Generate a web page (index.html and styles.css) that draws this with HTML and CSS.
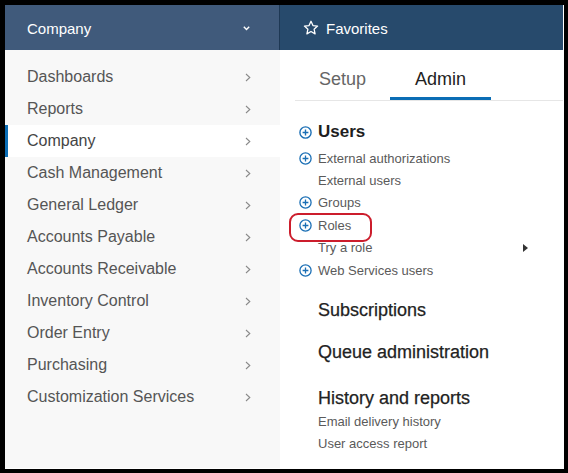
FILE: index.html
```html
<!DOCTYPE html>
<html>
<head>
<meta charset="utf-8">
<link rel="stylesheet" href="styles.css">
</head>
<body>
<div class="app">
  <header class="hdr hdr-left">
    <span class="hdr-title">Company</span>
    <svg class="hdr-chev" width="7" height="5" viewBox="0 0 7 5"><path d="M0.8 0.8 L3.5 3.6 L6.2 0.8" fill="none" stroke="#fff" stroke-width="1.4"/></svg>
  </header>
  <header class="hdr hdr-right">
    <svg class="star" width="16" height="16" viewBox="0 0 16 16"><path d="M8 1.3 L9.95 5.6 L14.6 6.1 L11.1 9.2 L12.1 13.9 L8 11.5 L3.9 13.9 L4.9 9.2 L1.4 6.1 L6.05 5.6 Z" fill="none" stroke="#fff" stroke-width="1.3" stroke-linejoin="round"/></svg>
    <span class="hdr-title">Favorites</span>
  </header>
  <nav class="sidebar">
    <ul class="menu">
      <li class="menu-item"><span>Dashboards</span><svg class="chev" width="6" height="9" viewBox="0 0 6 9"><path d="M1 1 L4.8 4.5 L1 8" fill="none" stroke="#8a8a8a" stroke-width="1.1"/></svg></li>
      <li class="menu-item"><span>Reports</span><svg class="chev" width="6" height="9" viewBox="0 0 6 9"><path d="M1 1 L4.8 4.5 L1 8" fill="none" stroke="#8a8a8a" stroke-width="1.1"/></svg></li>
      <li class="menu-item active"><span>Company</span><svg class="chev" width="6" height="9" viewBox="0 0 6 9"><path d="M1 1 L4.8 4.5 L1 8" fill="none" stroke="#8a8a8a" stroke-width="1.1"/></svg></li>
      <li class="menu-item"><span>Cash Management</span><svg class="chev" width="6" height="9" viewBox="0 0 6 9"><path d="M1 1 L4.8 4.5 L1 8" fill="none" stroke="#8a8a8a" stroke-width="1.1"/></svg></li>
      <li class="menu-item"><span>General Ledger</span><svg class="chev" width="6" height="9" viewBox="0 0 6 9"><path d="M1 1 L4.8 4.5 L1 8" fill="none" stroke="#8a8a8a" stroke-width="1.1"/></svg></li>
      <li class="menu-item"><span>Accounts Payable</span><svg class="chev" width="6" height="9" viewBox="0 0 6 9"><path d="M1 1 L4.8 4.5 L1 8" fill="none" stroke="#8a8a8a" stroke-width="1.1"/></svg></li>
      <li class="menu-item"><span>Accounts Receivable</span><svg class="chev" width="6" height="9" viewBox="0 0 6 9"><path d="M1 1 L4.8 4.5 L1 8" fill="none" stroke="#8a8a8a" stroke-width="1.1"/></svg></li>
      <li class="menu-item"><span>Inventory Control</span><svg class="chev" width="6" height="9" viewBox="0 0 6 9"><path d="M1 1 L4.8 4.5 L1 8" fill="none" stroke="#8a8a8a" stroke-width="1.1"/></svg></li>
      <li class="menu-item"><span>Order Entry</span><svg class="chev" width="6" height="9" viewBox="0 0 6 9"><path d="M1 1 L4.8 4.5 L1 8" fill="none" stroke="#8a8a8a" stroke-width="1.1"/></svg></li>
      <li class="menu-item"><span>Purchasing</span><svg class="chev" width="6" height="9" viewBox="0 0 6 9"><path d="M1 1 L4.8 4.5 L1 8" fill="none" stroke="#8a8a8a" stroke-width="1.1"/></svg></li>
      <li class="menu-item"><span>Customization Services</span><svg class="chev" width="6" height="9" viewBox="0 0 6 9"><path d="M1 1 L4.8 4.5 L1 8" fill="none" stroke="#8a8a8a" stroke-width="1.1"/></svg></li>
    </ul>
  </nav>
  <main class="pane">
    <div class="tabs">
      <div class="tab">Setup</div>
      <div class="tab tab-active">Admin</div>
    </div>
    <section class="content">
      <div class="row heading heading-main">
        <svg class="plus" width="13" height="13" viewBox="0 0 13 13"><circle cx="6.5" cy="6.5" r="5.6" fill="none" stroke="#1b6fb5" stroke-width="1.4"/><path d="M6.5 3.6 V9.4 M3.6 6.5 H9.4" stroke="#1b6fb5" stroke-width="1.4"/></svg>
        <span>Users</span>
      </div>
      <ul class="links">
        <li class="row"><svg class="plus" width="13" height="13" viewBox="0 0 13 13"><circle cx="6.5" cy="6.5" r="5.6" fill="none" stroke="#1b6fb5" stroke-width="1.3"/><path d="M6.5 3.6 V9.4 M3.6 6.5 H9.4" stroke="#1b6fb5" stroke-width="1.3"/></svg><span>External authorizations</span></li>
        <li class="row indent"><span>External users</span></li>
        <li class="row"><svg class="plus" width="13" height="13" viewBox="0 0 13 13"><circle cx="6.5" cy="6.5" r="5.6" fill="none" stroke="#1b6fb5" stroke-width="1.3"/><path d="M6.5 3.6 V9.4 M3.6 6.5 H9.4" stroke="#1b6fb5" stroke-width="1.3"/></svg><span>Groups</span></li>
        <li class="row highlighted"><svg class="plus" width="13" height="13" viewBox="0 0 13 13"><circle cx="6.5" cy="6.5" r="5.6" fill="none" stroke="#1b6fb5" stroke-width="1.3"/><path d="M6.5 3.6 V9.4 M3.6 6.5 H9.4" stroke="#1b6fb5" stroke-width="1.3"/></svg><span>Roles</span></li>
        <li class="row indent"><span>Try a role</span><span class="tri"></span></li>
        <li class="row"><svg class="plus" width="13" height="13" viewBox="0 0 13 13"><circle cx="6.5" cy="6.5" r="5.6" fill="none" stroke="#1b6fb5" stroke-width="1.3"/><path d="M6.5 3.6 V9.4 M3.6 6.5 H9.4" stroke="#1b6fb5" stroke-width="1.3"/></svg><span>Web Services users</span></li>
      </ul>
      <div class="row indent heading heading-sub h-subs"><span>Subscriptions</span></div>
      <div class="row indent heading heading-sub h-queue"><span>Queue administration</span></div>
      <div class="row indent heading heading-sub h-hist"><span>History and reports</span></div>
      <ul class="links">
        <li class="row indent"><span>Email delivery history</span></li>
        <li class="row indent"><span>User access report</span></li>
      </ul>
    </section>
  </main>
</div>
</body>
</html>
```
FILE: styles.css
```css
* { box-sizing: border-box; }
html, body { margin: 0; height: 100%; }
body {
  background: #000;
  padding: 5px 4px 4px 5px;
  font-family: "Liberation Sans", Arial, sans-serif;
}
ul { list-style: none; margin: 0; padding: 0; }

.app {
  display: grid;
  grid-template-columns: 275px 1fr;
  grid-template-rows: 45px 1fr;
  height: 464px;
  border-right: 1px solid #fff;
  border-bottom: 1px solid #fff;
  background: #fff;
}

.hdr {
  display: flex;
  align-items: center;
  color: #fff;
  font-size: 15px;
  padding-top: 1px;
}
.hdr-left {
  background: #405a7b;
  border-right: 1px solid #1e3854;
  padding-left: 22px;
  padding-right: 29px;
  justify-content: space-between;
}
.hdr-right {
  background: #274a6c;
  padding-left: 23px;
  gap: 7px;
}
.hdr-chev { display: block; }
.star { display: block; }

.sidebar {
  background: #f8f8f8;
  padding-top: 11px;
}
.menu-item {
  height: 32px;
  display: flex;
  align-items: center;
  justify-content: space-between;
  padding: 0 29px 0 22px;
  font-size: 16px;
  color: #555;
}
.menu-item.active {
  background: #fff;
  border-left: 3px solid #0b6db5;
  padding-left: 19px;
  color: #444;
}
.chev { display: block; }

.pane { background: #fff; }
.tabs {
  display: flex;
  margin-left: 15px;
  border-bottom: 1px solid #e6e6e6;
}
.tab {
  height: 50px;
  padding: 18px 24px 0;
  line-height: 22px;
  font-size: 18px;
  color: #666;
}
.tab-active {
  padding: 18px 25px 0;
  color: #222;
  border-bottom: 3px solid #0b6db5;
}

.content {
  padding: 18px 35px 0 19px;
}
.row {
  display: flex;
  align-items: center;
  gap: 6px;
  height: 22.4px;
  font-size: 13px;
  color: #5a5a5a;
}
.row.indent { padding-left: 19px; }
.plus { display: block; flex: none; }

.heading-main {
  height: 26px;
  margin-bottom: 2px;
  font-size: 17px;
  font-weight: bold;
  color: #1e1e1e;
}
.heading-sub {
  height: 26px;
  font-size: 18px;
  color: #222;
  -webkit-text-stroke: 0.25px #222;
}
.h-subs { margin-top: 16px; }
.h-queue { margin-top: 16px; }
.h-hist { margin-top: 21px; height: 24px; }

.highlighted { position: relative; }
.highlighted::after {
  content: "";
  position: absolute;
  left: -10px;
  top: -1px;
  width: 79px;
  height: 25px;
  border: 2px solid #cc1d2c;
  border-radius: 9px;
}

.tri {
  margin-left: auto;
  width: 0;
  height: 0;
  border-top: 4px solid transparent;
  border-bottom: 4px solid transparent;
  border-left: 5px solid #333;
}
```
